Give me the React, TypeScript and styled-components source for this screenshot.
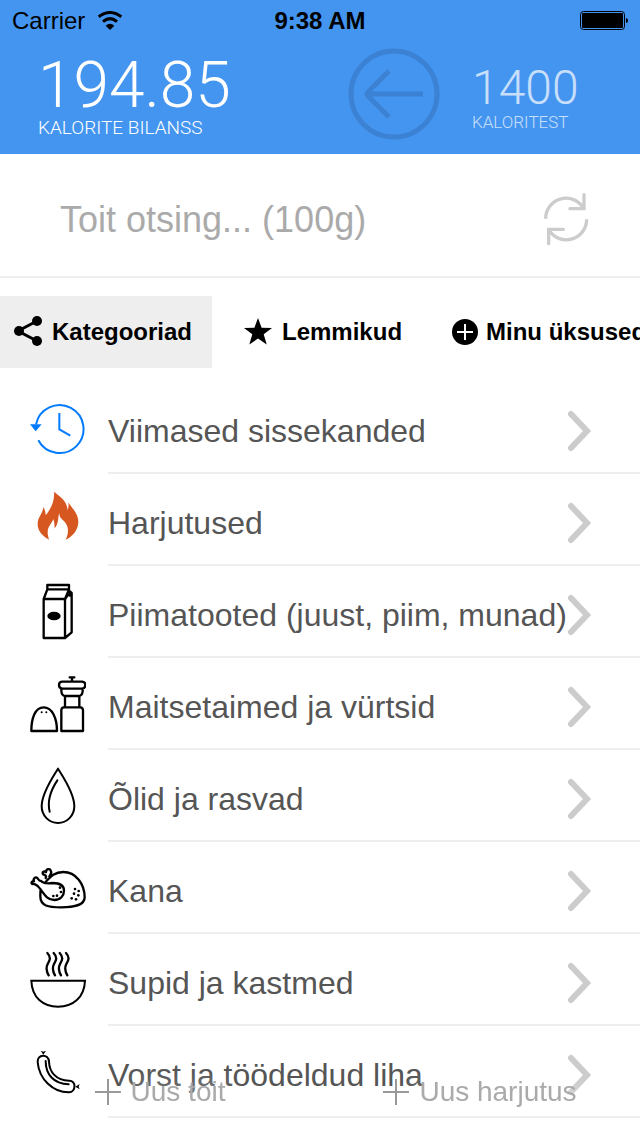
import React from "react";
import styled, { createGlobalStyle } from "styled-components";

const GlobalStyle = createGlobalStyle`
  * { box-sizing: border-box; }
  body {
    margin: 0;
    background: #fff;
    color: #000;
    font-family: "Liberation Sans", Arial, Helvetica, sans-serif;
  }
  button { border: 0; padding: 0; background: none; color: inherit; font: inherit; cursor: pointer; }
  ul { margin: 0; padding: 0; list-style: none; }
  svg { display: block; flex: none; }
`;

const Screen = styled.div`
  overflow-x: hidden;
`;

const Header = styled.header`
  background: #4495f0;
`;

const StatusBar = styled.div`
  display: grid;
  grid-template-columns: 1fr auto 1fr;
  align-items: center;
  height: 42px;
  padding: 0 12px;
  font-size: 24px;
  line-height: 42px;
`;

const Carrier = styled.div`
  display: flex;
  align-items: center;
  gap: 12px;
`;

const Time = styled.time`
  font-weight: 700;
`;

const Battery = styled.div`
  display: flex;
  justify-content: flex-end;
`;

const Balance = styled.div`
  display: flex;
  align-items: flex-start;
  height: 112px;
  padding: 6px 60px 0 38px;
  color: #fff;
  font-family: Roboto, "Liberation Sans", sans-serif;
  font-weight: 300;
`;

const Figure = styled.div<{ $grow?: boolean; $faded?: boolean }>`
  flex: ${(p) => (p.$grow ? "1" : "none")};
  min-width: 108px;
  padding-top: ${(p) => (p.$faded ? "16px" : "6px")};
  opacity: ${(p) => (p.$faded ? 0.7 : 1)};
`;

const Amount = styled.div<{ $small?: boolean }>`
  font-size: ${(p) => (p.$small ? "48px" : "64px")};
  line-height: ${(p) => (p.$small ? "48px" : "64px")};
`;

const Caption = styled.div<{ $small?: boolean }>`
  font-size: ${(p) => (p.$small ? "17px" : "19px")};
  line-height: 20px;
`;

const BackButton = styled.button`
  margin-right: 32px;
`;

const SearchBar = styled.form`
  display: flex;
  align-items: center;
  height: 124px;
  padding: 10px 50px 0 60px;
  border-bottom: 2px solid #eee;
`;

const SearchInput = styled.input`
  flex: 1;
  min-width: 0;
  height: 56px;
  padding: 0;
  border: 0;
  outline: 0;
  background: none;
  font: inherit;
  font-size: 36px;
  &::placeholder { color: #aaa; opacity: 1; }
`;

const Tabs = styled.nav`
  display: flex;
  gap: 18px;
  margin-top: 18px;
  overflow: hidden;
`;

const Tab = styled.button<{ $active?: boolean }>`
  display: flex;
  flex: none;
  align-items: center;
  gap: 8px;
  height: 72px;
  padding: 0 20px 0 12px;
  background: ${(p) => (p.$active ? "#eee" : "transparent")};
  font-size: 24px;
  font-weight: 700;
`;

const List = styled.ul`
  margin-top: 14px;
`;

const Row = styled.li`
  display: flex;
  gap: 22px;
  padding-left: 30px;
`;

const IconCell = styled.span`
  padding-top: 12px;
`;

const RowButton = styled.button`
  display: flex;
  flex: 1;
  align-items: center;
  min-width: 0;
  height: 92px;
  padding: 8px 48px 0 0;
  border-bottom: 2px solid #eee;
  color: #555;
  font-size: 32px;
  text-align: left;
  white-space: nowrap;
`;

const RowLabel = styled.span`
  flex: 1;
  min-width: 0;
`;

const Footer = styled.footer`
  position: fixed;
  right: 0;
  bottom: 0;
  left: 0;
  display: grid;
  grid-template-columns: 1fr 1fr;
  height: 88px;
`;

const AddButton = styled.button`
  display: flex;
  align-items: center;
  justify-content: center;
  gap: 10px;
  color: #aaa;
  font-size: 28px;
  text-shadow: 0 0 20px #fff;
`;

const line = {
  fill: "none",
  stroke: "#000",
  strokeWidth: 7,
  strokeLinecap: "round",
  strokeLinejoin: "round",
} as const;

const categories: { label: string; top: number; icon: React.ReactNode }[] = [
  {
    label: "Viimased sissekanded",
    top: 12,
    icon: (
      <>
        <path d="M108 103A72 72 0 1 1 115 151" fill="none" stroke="#007aff" strokeWidth="6" />
        <path d="M178 69V118L211 137" fill="none" stroke="#007aff" strokeWidth="6" />
        <path d="M90 103H125L107 124Z" fill="#007aff" />
      </>
    ),
  },
  {
    label: "Harjutused",
    top: 288,
    icon: (
      <path
        fill="#d75720"
        d="M162 305C176 318 202 331 203 361C206 353 206 345 205 337C214 354 234 367 235 395C235 421 216 440 197 449C203 437 205 426 203 413C200 392 176 388 178 369C173 381 177 401 164 415C163 406 164 397 160 387C155 401 143 409 143 427C143 436 145 442 147 449C128 438 113 424 113 403C113 380 129 371 130 351C135 360 137 367 137 376C150 360 165 335 162 305Z"
      />
    ),
  },
  {
    label: "Piimatooted (juust, piim, munad)",
    top: 39,
    icon: (
      <>
        <path {...line} d="M131 102H195V219H131ZM131 102L142 73H207L195 102M142 73V60H207V73M207 77L215 84V202L195 219M207 84L196 102M207 84L209 92L215 86" />
        <ellipse cx="162" cy="153" rx="20" ry="13" />
      </>
    ),
  },
  {
    label: "Maitsetaimed ja vürtsid",
    top: 315,
    icon: (
      <>
        <path {...line} d="M94 498C94 460 105 427 131 427S171 460 171 498ZM190 427H242Q249 429 249 436V498H184V436Q184 429 190 427ZM195 394V426M238 394V426M184 371H248V378Q247 393 235 393H197Q185 393 184 378ZM187 350H247Q256 351 256 360T247 371H187Q177 370 177 360T187 350M216 338V349M209 337H223" />
        <circle cx="125" cy="442" r="3" />
        <circle cx="139" cy="442" r="3" />
      </>
    ),
  },
  {
    label: "Õlid ja rasvad",
    top: 21,
    icon: (
      <>
        <path {...line} strokeWidth={6} d="M174 41C164 58 125 112 125 154C125 182 147 204 174 204S223 182 223 154C223 112 184 58 174 41Z" />
        <path {...line} strokeWidth={6} d="M172 76C158 97 139 130 149 170" />
      </>
    ),
  },
  {
    label: "Kana",
    top: 297,
    icon: (
      <>
        <path {...line} d="M134 384C150 367 162 351 190 351C228 351 254 388 254 427C254 452 222 457 183 457C145 457 121 453 121 424C121 415 121 409 122 403M113 393C129 408 136 435 163 435C181 435 192 422 192 407C192 391 178 384 158 384C144 386 132 387 123 378M113 393C108 389 104 386 97 387C91 383 97 378 102 379C98 371 108 363 113 370C117 376 117 378 123 378M137 369C141 363 135 360 130 358C124 352 132 347 138 351C138 342 150 339 152 347C158 354 150 358 148 365" />
        {[[180, 398], [183, 411], [171, 422], [160, 423], [225, 402], [236, 408], [222, 416], [235, 421], [215, 430], [228, 433]].map(([x, y]) => (
          <circle key={`${x}-${y}`} cx={x} cy={y} r="4" />
        ))}
      </>
    ),
  },
  {
    label: "Supid ja kastmed",
    top: 33,
    icon: (
      <>
        <path {...line} strokeWidth={6} strokeLinejoin="miter" d="M94 137H255C253 188 219 215 174 215S96 188 94 137Z" />
        {[0, 19, 37, 56].map((x) => (
          <path {...line} key={x} d={`M${142 + x} 54C${155 + x} 68 ${149 + x} 76 ${143 + x} 87S${138 + x} 107 ${146 + x} 121`} />
        ))}
      </>
    ),
  },
  {
    label: "Vorst ja töödeldud liha",
    top: 309,
    icon: (
      <>
        <path {...line} strokeWidth={6} d="M113 381C111 357 146 355 147 380C148 410 168 437 207 437C230 436 228 472 207 472C160 473 117 433 113 381Z" />
        <path {...line} strokeWidth={6} d="M137 378C137 418 161 447 206 448" />
        <path d="M122 347L130 350L138 347L130 359ZM239 447L226 455L239 463L236 455Z" />
      </>
    ),
  },
];

const WifiIcon = () => (
  <svg width="26" height="20" viewBox="0 0 78 60" aria-hidden="true">
    <path d="M5 17Q39 -8 73 17M18 32Q39 14 60 32" fill="none" stroke="#000" strokeWidth="9" />
    <path d="M26 44Q39 33 52 44L39 57Z" />
  </svg>
);

const BatteryIcon = () => (
  <svg width="50" height="20" viewBox="0 0 50 20" aria-hidden="true">
    <rect x="2.500" y="0.500" width="44" height="18" rx="3" fill="none" stroke="#000" />
    <rect x="4" y="2" width="41" height="15" rx="1" />
    <path d="M48 7Q50 7 50 9.500T48 12Z" />
  </svg>
);

const BackIcon = () => (
  <svg width="92" height="92" viewBox="0 0 92 92" fill="none" stroke="#3c82d4" strokeWidth="5" aria-hidden="true">
    <circle cx="46" cy="46" r="43" />
    <path d="M41 23L20 44Q18 46 20 48L41 69M19 46H75" />
  </svg>
);

const RefreshIcon = () => (
  <svg width="48" height="56" viewBox="0 0 144 168" fill="none" stroke="#ccc" strokeWidth="10" aria-hidden="true">
    <path d="M11 80A61 61 0 0 1 123 46M134 82A61 61 0 0 1 22 116" />
    <path d="M126 8V50H84M20 155V112H64" strokeLinecap="round" />
  </svg>
);

const ShareIcon = () => (
  <svg width="32" height="32" viewBox="0 0 32 32" aria-hidden="true">
    <path d="M25 5L6 15L25 25" fill="none" stroke="#000" strokeWidth="3" />
    <circle cx="25" cy="5" r="5" />
    <circle cx="7" cy="15" r="5" />
    <circle cx="25" cy="25" r="5" />
  </svg>
);

const StarIcon = () => (
  <svg width="32" height="32" viewBox="0 0 32 32" aria-hidden="true">
    <path d="M16 2L19.600 11.700L30 12L21.700 18.300L24.700 28.500L16 22.500L7.300 28.500L10.300 18.300L2 12L12.400 11.700Z" />
  </svg>
);

const PlusCircleIcon = () => (
  <svg width="26" height="26" viewBox="3 3 26 26" aria-hidden="true">
    <circle cx="16" cy="16" r="13" />
    <path d="M16 8V24M8 16H24" stroke="#fff" strokeWidth="2" />
  </svg>
);

const PlusIcon = () => (
  <svg width="26" height="26" viewBox="0 0 26 26" aria-hidden="true">
    <path d="M13 0V26M0 13H26" stroke="#999" strokeWidth="2" />
  </svg>
);

const Chevron = () => (
  <svg width="26" height="44" viewBox="0 0 26 44" aria-hidden="true">
    <path d="M5 5L21 22L5 39" fill="none" stroke="#ccc" strokeWidth="6" strokeLinecap="round" />
  </svg>
);

export default function App() {
  return (
    <Screen>
      <GlobalStyle />
      <Header>
        <StatusBar>
          <Carrier>
            <span>Carrier</span>
            <WifiIcon />
          </Carrier>
          <Time>9:38 AM</Time>
          <Battery>
            <BatteryIcon />
          </Battery>
        </StatusBar>
        <Balance>
          <Figure $grow>
            <Amount>194.85</Amount>
            <Caption>KALORITE BILANSS</Caption>
          </Figure>
          <BackButton type="button" aria-label="Tagasi">
            <BackIcon />
          </BackButton>
          <Figure $faded>
            <Amount $small>1400</Amount>
            <Caption $small>KALORITEST</Caption>
          </Figure>
        </Balance>
      </Header>
      <SearchBar onSubmit={(e) => e.preventDefault()}>
        <SearchInput type="text" aria-label="Toit otsing" placeholder="Toit otsing... (100g)" />
        <button type="submit" aria-label="Uuenda">
          <RefreshIcon />
        </button>
      </SearchBar>
      <Tabs>
        <Tab type="button" $active>
          <ShareIcon />
          Kategooriad
        </Tab>
        <Tab type="button">
          <StarIcon />
          Lemmikud
        </Tab>
        <Tab type="button">
          <PlusCircleIcon />
          Minu üksused
        </Tab>
      </Tabs>
      <List>
        {categories.map(({ label, top, icon }) => (
          <Row key={label}>
            <IconCell>
              <svg width="56" height="72" viewBox={`90 ${top} 168 216`} aria-hidden="true">
                {icon}
              </svg>
            </IconCell>
            <RowButton type="button">
              <RowLabel>{label}</RowLabel>
              <Chevron />
            </RowButton>
          </Row>
        ))}
      </List>
      <Footer>
        <AddButton type="button">
          <PlusIcon />
          Uus toit
        </AddButton>
        <AddButton type="button">
          <PlusIcon />
          Uus harjutus
        </AddButton>
      </Footer>
    </Screen>
  );
}
